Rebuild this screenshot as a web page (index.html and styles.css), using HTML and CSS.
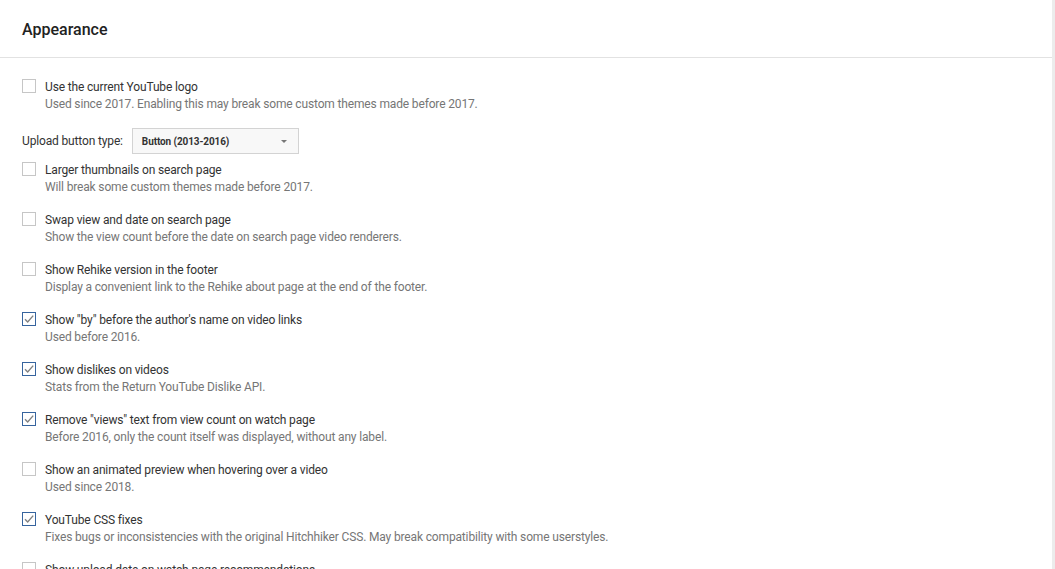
FILE: index.html
```html
<!DOCTYPE html>
<html>
<head>
<meta charset="utf-8">
<link rel="stylesheet" href="styles.css">
</head>
<body>
<div class="page">
  <div class="panel">
    <div class="panel-header"><h2 class="title">Appearance</h2></div>
    <div class="panel-body">
      <div class="option">
        <span class="checkbox"></span>
        <div class="texts">
          <div class="label">Use the current YouTube logo</div>
          <div class="desc">Used since 2017. Enabling this may break some custom themes made before 2017.</div>
        </div>
      </div>
      <div class="select-row">
        <span class="select-label">Upload button type:</span>
        <div class="select"><span class="select-text">Button (2013-2016)</span><span class="arrow"></span></div>
      </div>
      <div class="option">
        <span class="checkbox"></span>
        <div class="texts">
          <div class="label">Larger thumbnails on search page</div>
          <div class="desc">Will break some custom themes made before 2017.</div>
        </div>
      </div>
      <div class="option">
        <span class="checkbox"></span>
        <div class="texts">
          <div class="label">Swap view and date on search page</div>
          <div class="desc">Show the view count before the date on search page video renderers.</div>
        </div>
      </div>
      <div class="option">
        <span class="checkbox"></span>
        <div class="texts">
          <div class="label">Show Rehike version in the footer</div>
          <div class="desc">Display a convenient link to the Rehike about page at the end of the footer.</div>
        </div>
      </div>
      <div class="option">
        <span class="checkbox checked"><svg viewBox="0 0 12 12" width="12" height="12"><path d="M2 6.3 L4.7 9 L10.2 2.6" fill="none" stroke="#808080" stroke-width="1.4"/></svg></span>
        <div class="texts">
          <div class="label">Show "by" before the author's name on video links</div>
          <div class="desc">Used before 2016.</div>
        </div>
      </div>
      <div class="option">
        <span class="checkbox checked"><svg viewBox="0 0 12 12" width="12" height="12"><path d="M2 6.3 L4.7 9 L10.2 2.6" fill="none" stroke="#808080" stroke-width="1.4"/></svg></span>
        <div class="texts">
          <div class="label">Show dislikes on videos</div>
          <div class="desc">Stats from the Return YouTube Dislike API.</div>
        </div>
      </div>
      <div class="option">
        <span class="checkbox checked"><svg viewBox="0 0 12 12" width="12" height="12"><path d="M2 6.3 L4.7 9 L10.2 2.6" fill="none" stroke="#808080" stroke-width="1.4"/></svg></span>
        <div class="texts">
          <div class="label">Remove "views" text from view count on watch page</div>
          <div class="desc">Before 2016, only the count itself was displayed, without any label.</div>
        </div>
      </div>
      <div class="option">
        <span class="checkbox"></span>
        <div class="texts">
          <div class="label">Show an animated preview when hovering over a video</div>
          <div class="desc">Used since 2018.</div>
        </div>
      </div>
      <div class="option">
        <span class="checkbox checked"><svg viewBox="0 0 12 12" width="12" height="12"><path d="M2 6.3 L4.7 9 L10.2 2.6" fill="none" stroke="#808080" stroke-width="1.4"/></svg></span>
        <div class="texts">
          <div class="label">YouTube CSS fixes</div>
          <div class="desc">Fixes bugs or inconsistencies with the original Hitchhiker CSS. May break compatibility with some userstyles.</div>
        </div>
      </div>
      <div class="option">
        <span class="checkbox"></span>
        <div class="texts">
          <div class="label">Show upload date on watch page recommendations</div>
          <div class="desc">Used before 2016.</div>
        </div>
      </div>
    </div>
  </div>
</div>
</body>
</html>
```

FILE: styles.css
```css
html, body {
  margin: 0;
  padding: 0;
  height: 100%;
  overflow: hidden;
  background: #fff;
}
body {
  font-family: Roboto, "Liberation Sans", Arial, sans-serif;
}
.page {
  display: flex;
  height: 100%;
}
.panel {
  width: 1052px;
  border-right: 3px solid #ececec;
  background: #fff;
}
.panel-header {
  height: 57px;
  border-bottom: 1px solid #e2e2e2;
  display: flex;
  align-items: center;
  padding-left: 22px;
}
.title {
  margin: 0;
  font-size: 16px;
  font-weight: 500;
  color: #222;
  line-height: 20px;
  position: relative;
  top: 1px;
}
.panel-body {
  padding: 20px 0 0 22px;
}
.option {
  display: flex;
  align-items: flex-start;
  margin-bottom: 15px;
}
.checkbox {
  width: 12px;
  height: 12px;
  border: 1px solid #c6c6c6;
  margin-top: 1px;
  margin-right: 9px;
  flex: none;
  display: flex;
  background: #fff;
}
.checkbox.checked {
  border-color: #36649e;
}
.texts {
  font-size: 12px;
  line-height: 17px;
  letter-spacing: -0.15px;
  padding-top: 1px;
}
.label {
  color: #333;
}
.desc {
  color: #767676;
}
.select-row {
  display: flex;
  align-items: center;
  margin-bottom: 7px;
}
.select-label {
  font-size: 12px;
  letter-spacing: -0.15px;
  color: #333;
  margin-right: 9px;
}
.select {
  width: 145px;
  height: 24px;
  border: 1px solid #d3d3d3;
  background: #f8f8f8;
  display: flex;
  align-items: center;
  justify-content: space-between;
  padding: 0 11px 0 9px;
}
.select-text {
  font-size: 10px;
  font-weight: bold;
  color: #333;
  letter-spacing: -0.1px;
}
.arrow {
  width: 0;
  height: 0;
  border-left: 3px solid transparent;
  border-right: 3px solid transparent;
  border-top: 3px solid #777;
}
```
